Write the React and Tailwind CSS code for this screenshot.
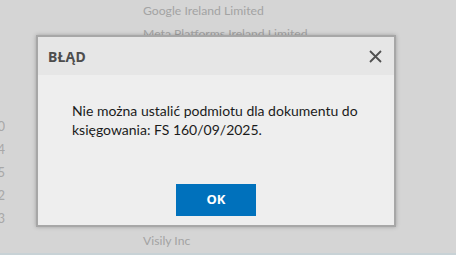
import React from 'react'

const names = ['Google Ireland Limited', 'Meta Platforms Ireland Limited', '', '', '', '', '', '', '', '', 'Visily Inc']
const codes = ['', '', '', '', '', '0', '4', '5', '2', '3', '']

const ErrorDialog = () => {
  return (
    <div className="absolute left-[36px] top-[35px] w-[360px] h-[192px] border-2 border-[#a7a7a7] bg-[#eeeeee] shadow-[0_0_4px_rgba(0,0,0,0.25)] flex flex-col">
      <div className="h-[38px] bg-[#e6e6e6] flex items-center justify-between pl-[10px] pr-[12px]">
        <span className="font-['Noto_Sans',sans-serif] text-[14px] font-bold text-[#4d4d4d] tracking-[0.2px]">BŁĄD</span>
        <svg width="13" height="13" viewBox="0 0 13 13" className="text-[#505050]">
          <path d="M1 1 L12 12 M12 1 L1 12" stroke="currentColor" strokeWidth="1.8" fill="none" />
        </svg>
      </div>
      <div className="flex-1 flex flex-col pl-[34px] pr-[20px] pt-[26px]">
        <p className="text-[14px] leading-[19px] text-[#1b1b1b]">
          Nie można ustalić podmiotu dla dokumentu do księgowania: FS 160/09/2025.
        </p>
        <div className="mt-auto mb-[9px] flex justify-center pr-[14px]">
          <button className="w-[80px] h-[32px] bg-[#0071bc] text-white text-[13px] font-bold font-['Noto_Sans',sans-serif]">OK</button>
        </div>
      </div>
    </div>
  )
}

export default function App() {
  return (
    <div className="relative w-[456px] h-[255px] bg-[#d5d5d5] overflow-hidden font-['Lato',sans-serif] flex flex-col">
      <div className="flex flex-col flex-1">
        {names.map((name, i) => (
          <div key={i} className="h-[23px] flex items-center shrink-0">
            <div className="w-[5px] overflow-hidden flex justify-end">
              <span className="text-[13px] text-[#a8a8a8] whitespace-nowrap">{codes[i]}</span>
            </div>
            <span className="ml-[138px] text-[12.2px] text-[#a3a3a3] whitespace-nowrap">{name}</span>
          </div>
        ))}
      </div>
      <div className="h-[4px] bg-[#c8d2d6]" />
      <ErrorDialog />
    </div>
  )
}
